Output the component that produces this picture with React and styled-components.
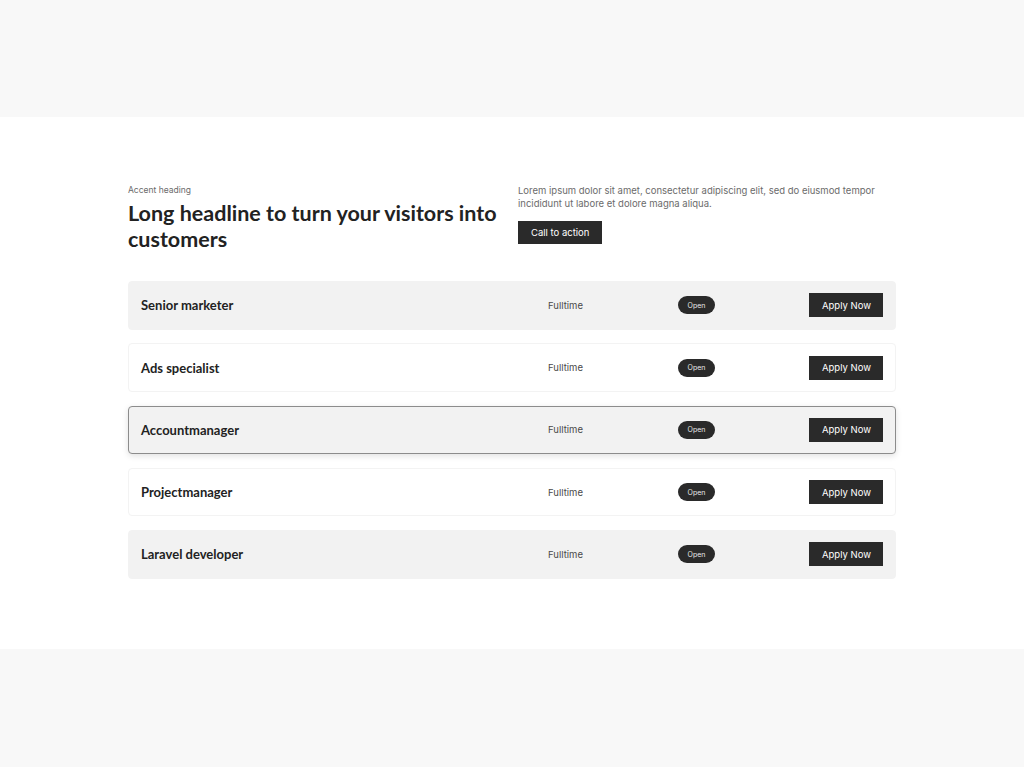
import React from 'react';
import styled, { createGlobalStyle } from 'styled-components';

const GlobalStyle = createGlobalStyle`
  html, body {
    margin: 0;
    padding: 0;
    background: #f8f8f8;
  }
  body {
    font-family: 'Inter', 'Liberation Sans', sans-serif;
    color: #2b2b2b;
  }
`;

const Page = styled.div`
  padding: 117px 0 119px;
`;

const Section = styled.section`
  background: #ffffff;
  padding: 67px 128px 70px;
`;

const Header = styled.div`
  display: grid;
  grid-template-columns: 377px 1fr;
  gap: 13px;
  margin-bottom: 29px;
`;

const Accent = styled.div`
  font-size: 8.5px;
  line-height: 12px;
  color: #6b6b6b;
  margin-bottom: 4px;
`;

const Headline = styled.h1`
  margin: 0;
  font-family: 'Lato', 'Liberation Sans', sans-serif;
  font-size: 21.5px;
  font-weight: 700;
  line-height: 26px;
  color: #222222;
`;

const Intro = styled.p`
  margin: 0 0 10px;
  font-size: 9.5px;
  line-height: 13px;
  color: #6b6b6b;
`;

const DarkButton = styled.button`
  border: none;
  border-radius: 0;
  background: #2a2a2a;
  color: #ffffff;
  font-family: inherit;
  font-size: 9.5px;
  white-space: nowrap;
  height: ${p => p.$h || 23}px;
  padding: 0 ${p => p.$px || 13}px;
  cursor: pointer;
`;

const List = styled.div`
  display: flex;
  flex-direction: column;
  gap: 13.75px;
`;

const Row = styled.div`
  display: grid;
  grid-template-columns: 1fr 130px 131px 74px;
  align-items: center;
  height: 48.5px;
  box-sizing: border-box;
  padding: 0 12px;
  border-radius: 4px;
  background: ${p => (p.$shaded ? '#f2f2f2' : '#ffffff')};
  border: 1px solid ${p => (p.$active ? '#8c8c8c' : p.$shaded ? '#f2f2f2' : '#f3f3f3')};
  box-shadow: ${p => (p.$active ? '0 2px 6px rgba(0,0,0,0.12)' : 'none')};
`;

const JobTitle = styled.div`
  font-family: 'Lato', 'Liberation Sans', sans-serif;
  font-size: 13px;
  font-weight: 700;
  color: #222222;
`;

const JobType = styled.div`
  font-size: 9.5px;
  color: #4a4a4a;
`;

const Pill = styled.span`
  justify-self: start;
  display: inline-flex;
  align-items: center;
  justify-content: center;
  width: 37px;
  height: 18px;
  border-radius: 9px;
  background: #2a2a2a;
  color: #e8e8e8;
  font-size: 7px;
`;

const jobs = [
  { title: 'Senior marketer', shaded: true },
  { title: 'Ads specialist' },
  { title: 'Accountmanager', shaded: true, active: true },
  { title: 'Projectmanager' },
  { title: 'Laravel developer', shaded: true },
];

export default function App() {
  return (
    <Page>
      <GlobalStyle />
      <Section>
        <Header>
          <div>
            <Accent>Accent heading</Accent>
            <Headline>Long headline to turn your visitors into customers</Headline>
          </div>
          <div>
            <Intro>
              Lorem ipsum dolor sit amet, consectetur adipiscing elit, sed do eiusmod tempor
              incididunt ut labore et dolore magna aliqua.
            </Intro>
            <DarkButton>Call to action</DarkButton>
          </div>
        </Header>
        <List>
          {jobs.map(job => (
            <Row key={job.title} $shaded={job.shaded} $active={job.active}>
              <JobTitle>{job.title}</JobTitle>
              <JobType>Fulltime</JobType>
              <Pill>Open</Pill>
              <DarkButton $h={24} $px={0}>Apply Now</DarkButton>
            </Row>
          ))}
        </List>
      </Section>
    </Page>
  );
}
